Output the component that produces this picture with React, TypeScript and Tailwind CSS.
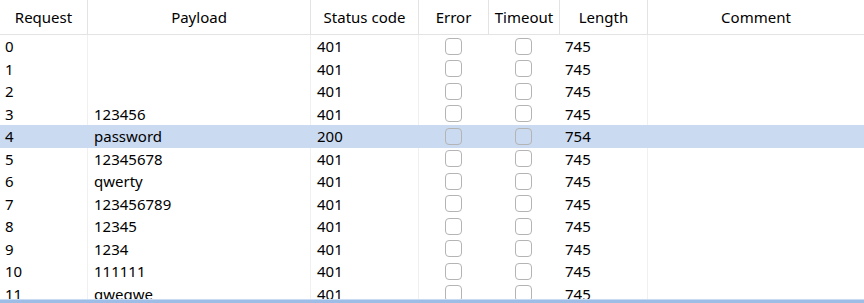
import React from "react";

const rows: [string, string, string, string][] = [
  ["0", "", "401", "745"],
  ["1", "", "401", "745"],
  ["2", "", "401", "745"],
  ["3", "123456", "401", "745"],
  ["4", "password", "200", "754"],
  ["5", "12345678", "401", "745"],
  ["6", "qwerty", "401", "745"],
  ["7", "123456789", "401", "745"],
  ["8", "12345", "401", "745"],
  ["9", "1234", "401", "745"],
  ["10", "111111", "401", "745"],
  ["11", "qweqwe", "401", "745"],
];

const cols = "grid grid-cols-[87px_223px_108px_70px_71px_88px_1fr]";

function Box() {
  return <div className="w-[17px] h-[17px] rounded-[4px] border-[1.5px] border-[#b4b4b4] bg-transparent" />;
}

export default function App() {
  return (
    <div
      className="w-[864px] h-[303px] overflow-hidden bg-white flex flex-col text-[15px] text-black"
      style={{ fontFamily: '"Noto Sans", "Open Sans", sans-serif' }}
    >
      <div className="flex-1 overflow-hidden">
        <div className={`${cols} h-[35px] border-b border-[#e3e3e3]`}>
          <div className="flex items-center justify-center">Request</div>
          <div className="flex items-center justify-center border-l border-[#e3e3e3]">Payload</div>
          <div className="flex items-center justify-center border-l border-[#e3e3e3]">Status code</div>
          <div className="flex items-center justify-center border-l border-[#e3e3e3]">Error</div>
          <div className="flex items-center justify-center border-l border-[#e3e3e3]">Timeout</div>
          <div className="flex items-center justify-center border-l border-[#e3e3e3]">Length</div>
          <div className="flex items-center justify-center border-l border-[#e3e3e3]">Comment</div>
        </div>
        {rows.map((r) => {
          const hi = r[0] === "4";
          return (
            <div key={r[0]} className={`${cols} h-[22.5px] ${hi ? "bg-[#cadaf0]" : ""}`}>
              <div className="flex items-center pl-[5px]">{r[0]}</div>
              <div className={`flex items-center pl-[6px] border-l ${hi ? "border-transparent" : "border-[#f0f0f0]"}`}>{r[1]}</div>
              <div className={`flex items-center pl-[6px] border-l ${hi ? "border-transparent" : "border-[#f0f0f0]"}`}>{r[2]}</div>
              <div className={`flex items-center justify-center border-l ${hi ? "border-transparent" : "border-[#f0f0f0]"}`}>
                <Box />
              </div>
              <div className="flex items-center justify-center">
                <Box />
              </div>
              <div className="flex items-center pl-[6px]">{r[3]}</div>
              <div className={`border-l ${hi ? "border-transparent" : "border-[#f0f0f0]"}`} />
            </div>
          );
        })}
      </div>
      <div className="h-px bg-[#c8dbf2]" />
      <div className="h-[3px] bg-[#9dbde6]" />
    </div>
  );
}
